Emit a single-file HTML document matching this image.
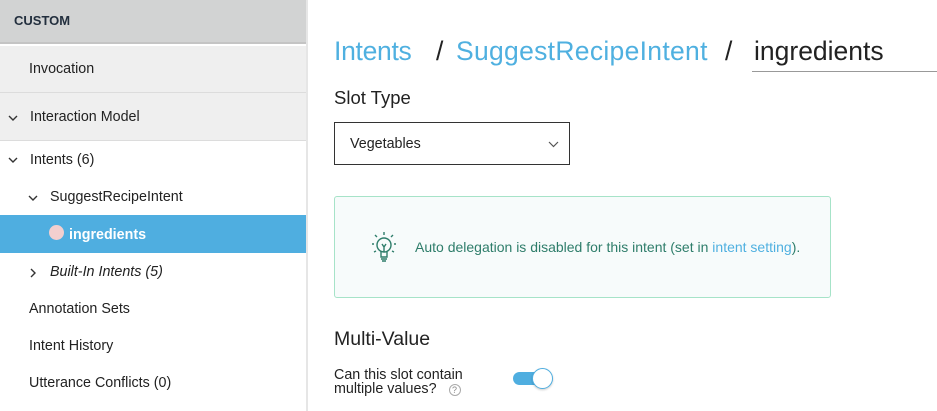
<!DOCTYPE html>
<html><head><style>
*{margin:0;padding:0;box-sizing:border-box}
body{width:937px;height:411px;overflow:hidden;background:#fff;font-family:"Liberation Sans",sans-serif;color:#222;position:relative}
.side{position:absolute;left:0;top:0;width:308px;height:411px;background:#fff;border-right:2px solid #e6e6e6}
.hd{height:44px;background:#d2d3d3;border-bottom:2px solid #c4c4c4;font-weight:bold;font-size:13px;padding:13px 0 0 14px;color:#232f3e}
.row{position:absolute;left:0;width:306px;font-size:14.3px;color:#222}
.t{position:absolute;white-space:nowrap}
.main{position:absolute;left:310px;top:0;right:0;bottom:0}
.bc{position:absolute;top:36px;font-size:26.5px;white-space:nowrap}
</style></head><body>
<div class="side">
<div class="hd">CUSTOM</div>
<div class="row" style="top:46px;height:47px;background:#efefef;border-bottom:1px solid #dcdcdc"><span class="t" style="left:29px;top:15px">Invocation</span></div>
<div class="row" style="top:93px;height:48px;background:#efefef;border-bottom:1px solid #dcdcdc">
<svg class="t" style="left:8px;top:21px" width="10" height="8"><path d="M1 2l4 4 4-4" stroke="#333" stroke-width="1.4" fill="none"/></svg>
<span class="t" style="left:30px;top:16px">Interaction Model</span></div>
<div class="row" style="top:141px;height:37px">
<svg class="t" style="left:8px;top:15px" width="10" height="8"><path d="M1 2l4 4 4-4" stroke="#333" stroke-width="1.4" fill="none"/></svg>
<span class="t" style="left:30px;top:11px">Intents (6)</span></div>
<div class="row" style="top:178px;height:37px">
<svg class="t" style="left:28px;top:16px" width="10" height="8"><path d="M1 2l4 4 4-4" stroke="#333" stroke-width="1.4" fill="none"/></svg>
<span class="t" style="left:50px;top:11px">SuggestRecipeIntent</span></div>
<div class="row" style="top:215px;height:38px;background:#4faee0">
<span class="t" style="left:49px;top:10px;width:15px;height:15px;border-radius:50%;background:#f3cfcf"></span>
<span class="t" style="left:69px;top:12px;color:#fff;font-weight:bold">ingredients</span></div>
<div class="row" style="top:253px;height:37px">
<svg class="t" style="left:29px;top:15px" width="8" height="10"><path d="M2 1l4 4-4 4" stroke="#333" stroke-width="1.4" fill="none"/></svg>
<span class="t" style="left:50px;top:11px;font-style:italic">Built-In Intents (5)</span></div>
<div class="row" style="top:301px"><span class="t" style="left:29px">Annotation Sets</span></div>
<div class="row" style="top:338px"><span class="t" style="left:29px">Intent History</span></div>
<div class="row" style="top:375px"><span class="t" style="left:29px">Utterance Conflicts (0)</span></div>
</div>
<div class="main">
<span class="bc" style="left:24px;color:#4fb0e0;letter-spacing:-0.3px">Intents</span>
<span class="bc" style="left:126px">/</span>
<span class="bc" style="left:146px;color:#4fb0e0;letter-spacing:0.3px">SuggestRecipeIntent</span>
<span class="bc" style="left:415px">/</span>
<div class="t" style="left:442px;top:36px;width:185px;height:36px;border-bottom:1px solid #999;font-size:26.5px;padding-left:2px">ingredients</div>
<div class="t" style="left:24px;top:87px;font-size:18.5px">Slot Type</div>
<div class="t" style="left:24px;top:122px;width:236px;height:43px;border:1px solid #333;font-size:14.3px;padding:13px 0 0 15px">Vegetables
<svg class="t" style="left:213px;top:18px" width="11" height="7"><path d="M1 1l4.5 4.5L10 1" stroke="#555" stroke-width="1.2" fill="none"/></svg></div>
<div class="t" style="left:24px;top:196px;width:497px;height:102px;border:1px solid #a6e3c8;border-radius:3px;background:#f7fbfb">
<svg class="t" style="left:33px;top:33px" width="34" height="36" viewBox="0 0 34 36"><g stroke="#2e7d6a" stroke-width="1.4" fill="none"><circle cx="16" cy="15" r="7"/><path d="M13 22v5h6v-5M13 27h6M13 29h6M14 31h4M14 14l2 3 2-3M16 17v5"/><path d="M16 2v3M7 5l2 2M25 5l-2 2M4 14h2M26 14h2M6 22l2-1M26 22l-2-1"/></g></svg>
<div class="t" style="left:80px;top:42px;font-size:14px;color:#2e7d6a">Auto delegation is disabled for this intent (set in <span style="color:#4fb0e0">intent setting</span>).</div></div>
<div class="t" style="left:24px;top:328px;font-size:19.5px">Multi-Value</div>
<div class="t" style="left:24px;top:368px;font-size:14.3px;line-height:14px">Can this slot contain<br>multiple values? <span style="display:inline-block;width:12px;height:12px;border:1px solid #aaa;border-radius:50%;font-size:9px;color:#888;text-align:center;line-height:11px;margin-left:8px">?</span></div>
<div class="t" style="left:203px;top:372px;width:33px;height:13px;border-radius:7px;background:#4faee0"></div>
<div class="t" style="left:222px;top:368px;width:21px;height:21px;border-radius:50%;background:#fff;border:1px solid #4faee0;box-shadow:0 1px 2px rgba(0,0,0,.2)"></div>
</div>
</body></html>
